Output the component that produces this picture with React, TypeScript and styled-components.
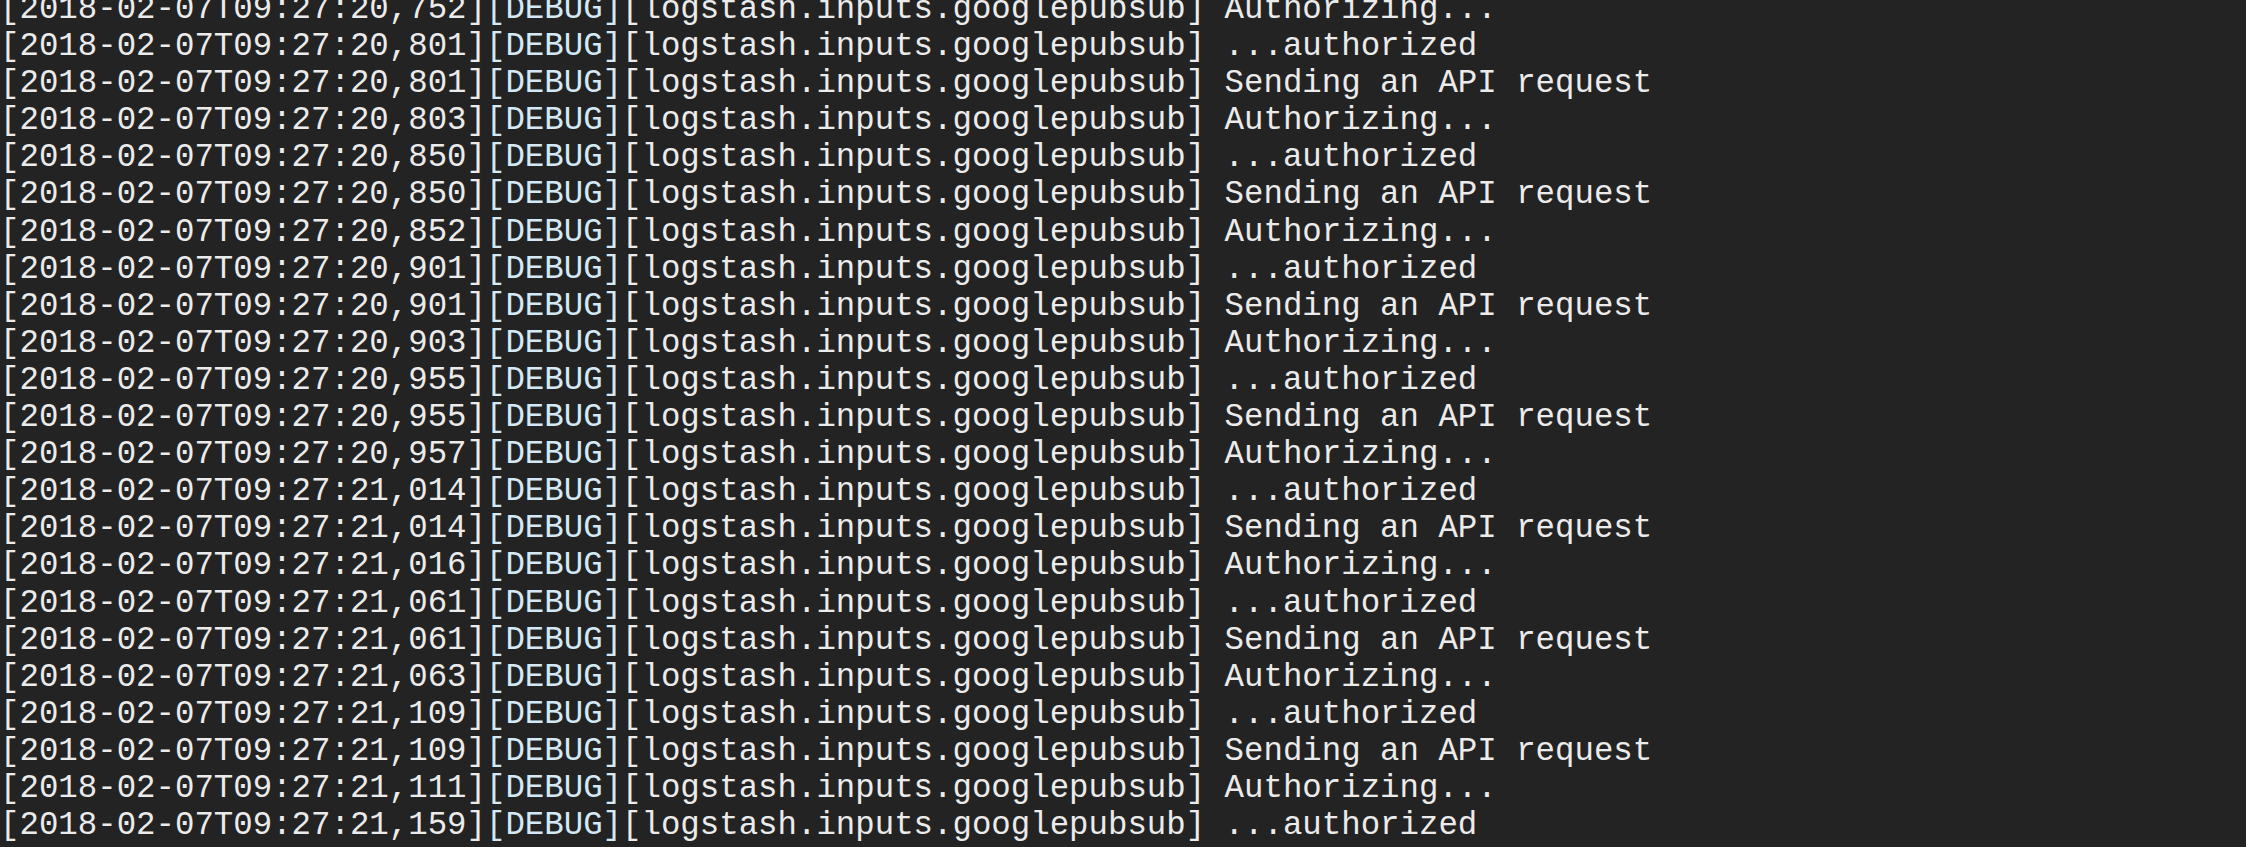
import styled, { createGlobalStyle } from "styled-components";

const GlobalStyle = createGlobalStyle`
	html, body {
		margin: 0;
		padding: 0;
		background-color: #232323;
		overflow: hidden;
	}
`;

const Terminal = styled.div`
	width: 2246px;
	height: 847px;
	background-color: #232323;
	overflow: hidden;
	font-family: "Liberation Mono", "Courier New", monospace;
	font-size: 32.4px;
	line-height: 37.1px;
	color: #ebebeb;
	white-space: pre;
`;

const LogList = styled.div`
	display: flex;
	flex-direction: column;
	margin-top: -9px;
`;

const LogLine = styled.div`
	display: flex;
`;

const Level = styled.span`
	color: #d3e9f6;
`;

const Message = styled.span`
	margin-left: 0.6em;
`;

type Row = [string, string];

const AUTH = "Authorizing...";
const DONE = "...authorized";
const SEND = "Sending an API request";

const rows: Row[] = [
	["20,752", AUTH],
	["20,801", DONE],
	["20,801", SEND],
	["20,803", AUTH],
	["20,850", DONE],
	["20,850", SEND],
	["20,852", AUTH],
	["20,901", DONE],
	["20,901", SEND],
	["20,903", AUTH],
	["20,955", DONE],
	["20,955", SEND],
	["20,957", AUTH],
	["21,014", DONE],
	["21,014", SEND],
	["21,016", AUTH],
	["21,061", DONE],
	["21,061", SEND],
	["21,063", AUTH],
	["21,109", DONE],
	["21,109", SEND],
	["21,111", AUTH],
	["21,159", DONE],
];

export default function App() {
	return (
		<>
			<GlobalStyle />
			<Terminal>
				<LogList>
					{rows.map(([time, msg], i) => (
						<LogLine key={i}>
							<span>{`[2018-02-07T09:27:${time}]`}</span>
							<Level>[DEBUG]</Level>
							<span>[logstash.inputs.googlepubsub]</span>
							<Message>{msg}</Message>
						</LogLine>
					))}
				</LogList>
			</Terminal>
		</>
	);
}
